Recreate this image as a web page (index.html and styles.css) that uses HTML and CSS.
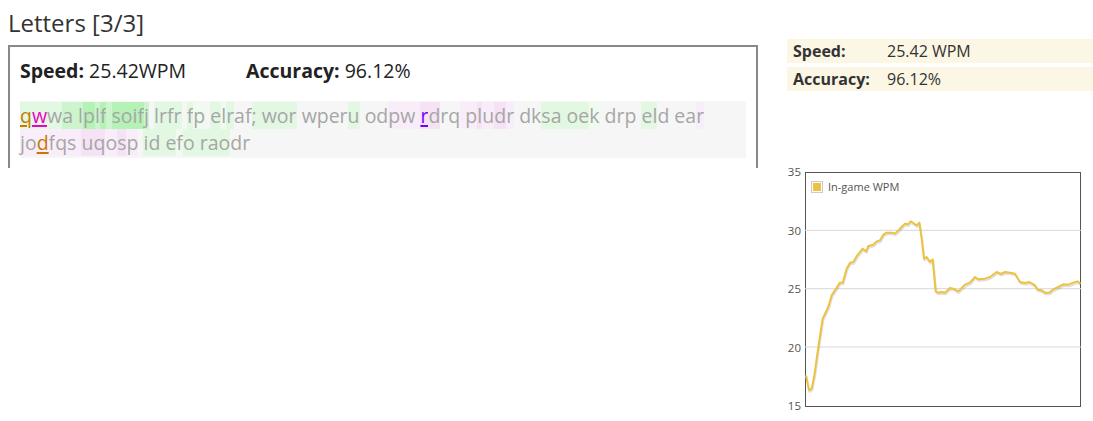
FILE: index.html
```html
<!DOCTYPE html>
<html>
<head>
<meta charset="utf-8">
<link rel="stylesheet" href="styles.css">
</head>
<body>
<div class="page">
  <div class="left">
    <h2 class="title">Letters [3/3]</h2>
    <div class="box">
      <div class="summary">
        <span class="sum-item"><b>Speed:</b> 25.42WPM</span>
        <span class="sum-item"><b>Accuracy:</b> 96.12%</span>
      </div>
      <div class="letters"><span class="g1 eo">q</span><span class="g1 em">w</span><span class="g1">w</span><span class="g2">a</span><span class="g2"> </span><span class="g2">l</span><span class="g3">p</span><span class="g2">l</span><span class="g3">f</span><span class="g2"> </span><span class="g3">s</span><span class="g3">o</span><span class="g3">i</span><span class="g3">f</span><span class="g2">j</span> <span class="g1">l</span><span class="g1">r</span><span class="g1">f</span><span class="g1">r</span> <span class="g1">f</span><span class="g0">p</span> <span class="g1">e</span><span class="g0">l</span><span class="g1">r</span>af<span class="g1">;</span><span class="g1"> </span><span class="g1">w</span><span class="g1">o</span><span class="g1">r</span> wper<span class="g1">u</span> od<span class="p1">p</span><span class="p1">w</span><span class="p1"> </span><span class="p2 ep">r</span><span class="p2">d</span>rq<span class="p1"> </span><span class="p1">p</span><span class="p2">l</span><span class="p1">u</span><span class="p2">d</span><span class="p1">r</span> dk<span class="g1">s</span><span class="g1">a</span><span class="g1"> </span><span class="g1">o</span><span class="g1">e</span><span class="g0">k</span> drp <span class="g1">e</span><span class="g1">l</span>d ea<span class="p1">r</span><br><span class="p1">j</span><span class="p1">o</span><span class="p1 eo">d</span><span class="p1">f</span><span class="p1">q</span><span class="p1">s</span><span class="p1"> </span><span class="p2">u</span><span class="p2">q</span><span class="p1">o</span><span class="p2">s</span><span class="p1">p</span> <span class="g1">i</span><span class="g1">d</span><span class="g1"> </span><span class="g1">e</span><span class="g0">f</span><span class="g1">o</span><span class="g1"> </span><span class="g1">r</span><span class="g1">a</span><span class="g1">o</span>dr</div>
    </div>
  </div>
  <div class="right">
    <table class="stats">
      <tr><th>Speed:</th><td>25.42 WPM</td></tr>
      <tr><th>Accuracy:</th><td>96.12%</td></tr>
    </table>
    <div class="chart">
      <div class="yaxis">
        <span>35</span><span>30</span><span>25</span><span>20</span><span>15</span>
      </div>
      <div class="plot">
        <svg class="plot-svg" width="276" height="234" viewBox="105 40 828 702" preserveAspectRatio="none">
          <line x1="105" y1="215" x2="933" y2="215" stroke="#d8d8d8" stroke-width="3"/>
          <line x1="105" y1="390" x2="933" y2="390" stroke="#d8d8d8" stroke-width="3"/>
          <line x1="105" y1="565" x2="933" y2="565" stroke="#d8d8d8" stroke-width="3"/>
          <polyline class="shadow" transform="translate(2,5)" points="108,650 117,695 125,690 133,650 145,565 158,480 175,445 185,410 195,395 210,372 218,372 230,330 240,312 250,310 262,290 278,270 288,278 295,262 310,258 320,248 330,245 340,228 350,222 365,222 375,225 385,215 395,205 405,195 413,197 422,188 430,193 440,200 448,192 455,240 462,300 470,295 480,310 488,302 497,398 505,402 515,400 525,402 540,388 550,390 565,398 585,378 600,372 615,355 625,362 645,360 660,355 680,340 693,346 705,340 720,342 735,345 750,370 765,373 778,370 795,380 803,393 815,395 825,402 838,402 850,392 865,385 880,377 895,378 910,372 922,368 932,375"/>
          <polyline class="series" points="108,650 117,695 125,690 133,650 145,565 158,480 175,445 185,410 195,395 210,372 218,372 230,330 240,312 250,310 262,290 278,270 288,278 295,262 310,258 320,248 330,245 340,228 350,222 365,222 375,225 385,215 395,205 405,195 413,197 422,188 430,193 440,200 448,192 455,240 462,300 470,295 480,310 488,302 497,398 505,402 515,400 525,402 540,388 550,390 565,398 585,378 600,372 615,355 625,362 645,360 660,355 680,340 693,346 705,340 720,342 735,345 750,370 765,373 778,370 795,380 803,393 815,395 825,402 838,402 850,392 865,385 880,377 895,378 910,372 922,368 932,375"/>
        </svg>
        <div class="legend"><span class="swatch"><span></span></span><span class="legend-label">In-game WPM</span></div>
      </div>
    </div>
  </div>
</div>
</body>
</html>
```
FILE: styles.css
```css
html, body {
  margin: 0;
  padding: 0;
  background: #fff;
}
body {
  font-family: "Open Sans", "Noto Sans", sans-serif;
  color: #333;
}
.page {
  display: flex;
  align-items: flex-start;
  padding: 0 0 0 8px;
  gap: 29px;
}
.left {
  width: 750px;
  flex: none;
}
.title {
  margin: 0;
  padding-top: 8px;
  height: 45px;
  box-sizing: border-box;
  font-weight: normal;
  font-size: 24px;
  line-height: 30px;
  color: #333;
}
.box {
  border: 2px solid #888;
  border-bottom: none;
  height: 123px;
  box-sizing: border-box;
  padding: 10px 10px 0 10px;
}
.summary {
  display: flex;
  height: 44px;
  align-items: flex-start;
  font-size: 19.5px;
  line-height: 28px;
  color: #222;
}
.sum-item:first-child {
  width: 226px;
}
.summary b {
  font-weight: bold;
}
.letters {
  background: #f6f6f6;
  height: 57px;
  box-sizing: border-box;
  padding: 1px 0;
  font-size: 19.5px;
  line-height: 27px;
  color: #a6a6a6;
  white-space: nowrap;
}
.g0 { background: #eefbee; }
.g1 { background: #e2f8e2; }
.g2 { background: #cdf5cd; }
.g3 { background: #b6f1b6; }
.p1 { background: #f8edf8; }
.p2 { background: #f5e3f5; }
.eo, .em, .ep {
  text-decoration: underline;
  text-decoration-thickness: 2px;
  text-underline-offset: 2px;
}
.eo { color: #c87800; }
.em { color: #ee00cc; }
.ep { color: #7000ff; }
.right {
  flex: 1;
  padding-top: 39px;
}
.stats {
  width: 100%;
  border-collapse: separate;
  border-spacing: 0 4px;
  margin-top: -4px;
  font-size: 16px;
  color: #333;
}
.stats th, .stats td {
  background: #fcf6e4;
  height: 24px;
  padding: 0;
  text-align: left;
}
.stats th {
  width: 94px;
  padding-left: 6px;
  font-weight: bold;
}
.chart {
  display: flex;
  margin-top: 77px;
  align-items: flex-start;
}
.yaxis {
  width: 14px;
  height: 246px;
  margin-top: -6px;
  display: flex;
  flex-direction: column;
  justify-content: space-between;
  align-items: flex-end;
  font-size: 11.5px;
  line-height: 12px;
  color: #545454;
  padding-right: 4px;
}
.plot {
  position: relative;
  width: 276px;
  height: 235px;
  border: 1px solid #545454;
  box-sizing: border-box;
}
.plot-svg {
  display: block;
  margin: -1px 0 0 -1px;
}
.series {
  fill: none;
  stroke: #edc240;
  stroke-width: 6;
  stroke-linejoin: round;
}
.shadow {
  fill: none;
  stroke: rgba(0,0,0,0.12);
  stroke-width: 6;
  stroke-linejoin: round;
}
.legend {
  position: absolute;
  left: 5px;
  top: 6px;
  display: flex;
  align-items: center;
  gap: 5px;
  font-size: 11px;
  color: #545454;
}
.swatch {
  display: inline-block;
  border: 1px solid #ccc;
  padding: 1px;
}
.swatch span {
  display: block;
  width: 8px;
  height: 8px;
  background: #edc240;
}
```
